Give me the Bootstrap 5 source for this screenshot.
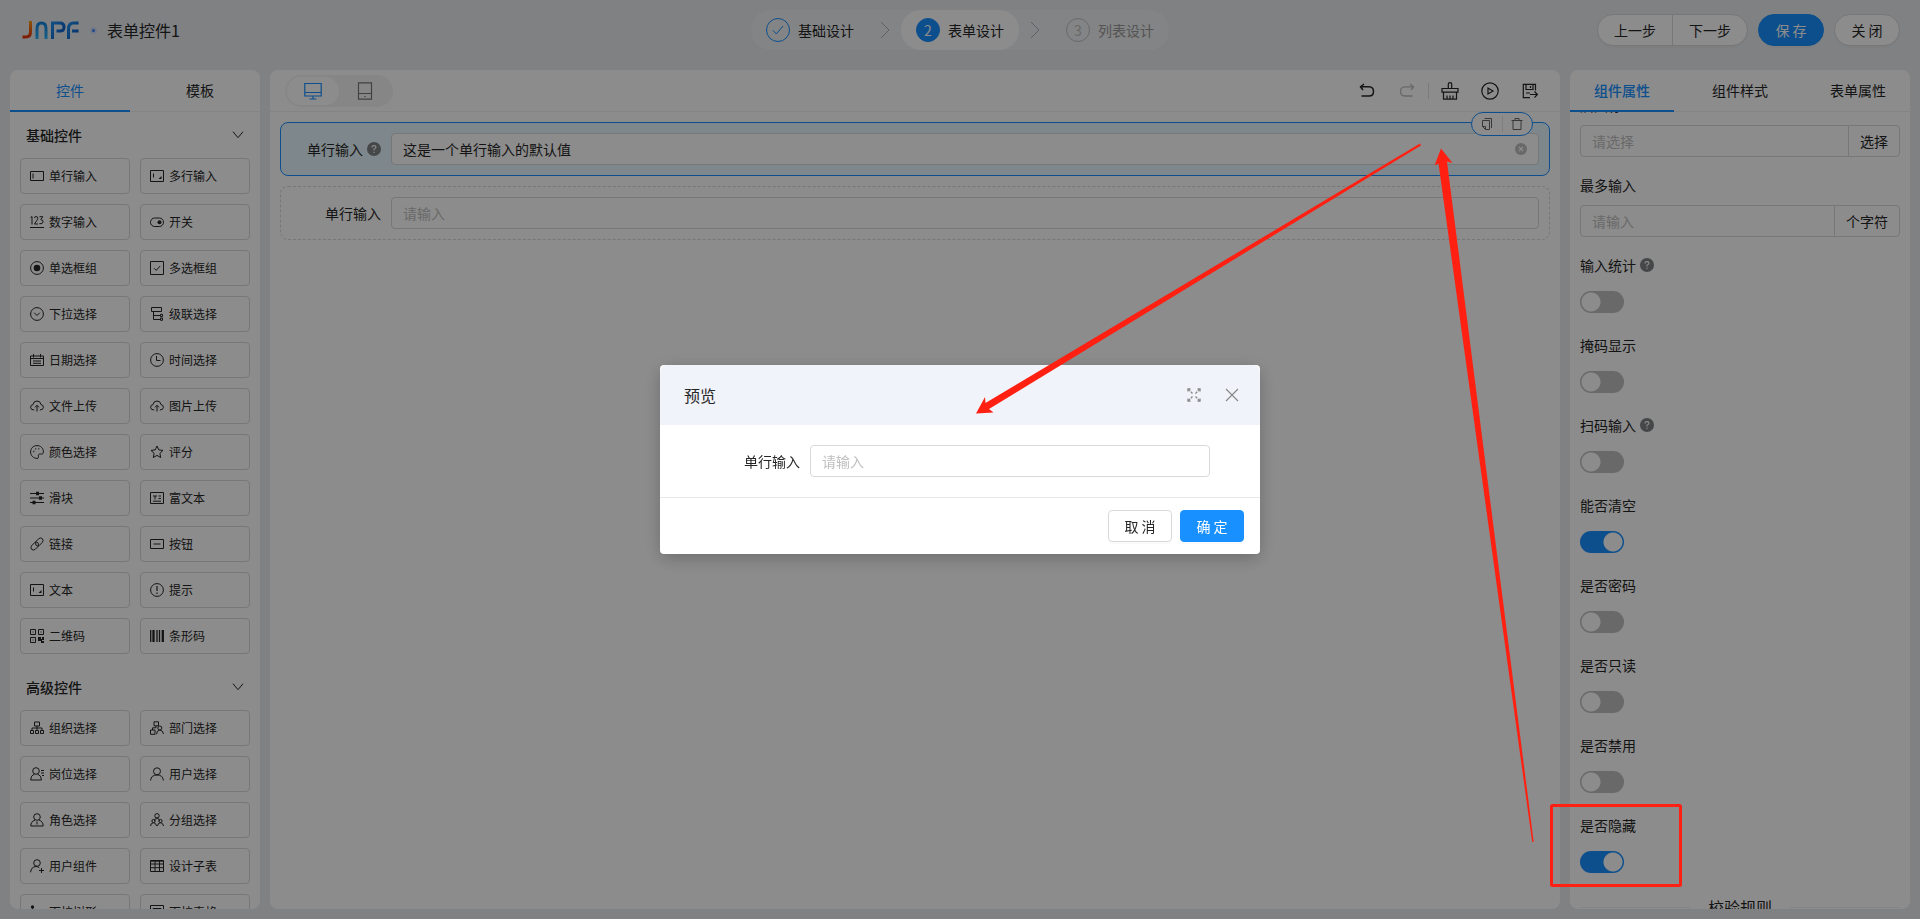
<!DOCTYPE html>
<html lang="zh-CN">
<head>
<meta charset="utf-8">
<meta name="viewport" content="width=device-width, initial-scale=1">
<title>表单设计</title>
<link href="https://cdn.jsdelivr.net/npm/bootstrap@5.3.0/dist/css/bootstrap.min.css" rel="stylesheet">
<style>
:root{--brand:#1890ff;--line:#d9d9d9;--ink:#262626;--hair:#f0f0f0}
body{font-family:"Noto Sans CJK SC",sans-serif;font-size:14px;line-height:22px;color:var(--ink);background:#e8ebef;overflow:hidden}
svg{display:block;flex:none;fill:none;stroke:currentColor}
.top-bar{display:grid;grid-template-columns:1fr auto 1fr;height:60px;padding:10px 20px 0;align-items:start}
.brand-side{height:40px;gap:10px}
.page-name{font-size:16px;line-height:24px}
.brand-dot{width:7px;height:7px;border:2px solid #d0dcf5;border-radius:50%;background:#4080ff}
.steps{height:40px;border-radius:20px;background:#eef0f3;gap:32px}
.step{height:40px;padding:0 15px;gap:8px;border-radius:20px}
.step-no{width:24px;height:24px;border:1px solid var(--brand);border-radius:50%;color:var(--brand)}
.step.now{background:#fff}
.step.now .step-no{background:var(--brand);color:#fff}
.step.later{color:#999}
.step.later .step-no{border-color:#bfbfbf;color:#bfbfbf}
.step-gap{margin:0 -21px;color:#aaadb3}
.btn{--bs-btn-font-size:14px;--bs-btn-line-height:22px;--bs-btn-padding-y:4px;--bs-btn-padding-x:15px;--bs-btn-border-radius:4px;--bs-btn-color:var(--ink);--bs-btn-border-color:var(--line);--bs-btn-bg:#fff;box-shadow:0 2px 0 rgba(0,0,0,.02);white-space:nowrap}
.btn-primary{--bs-btn-bg:var(--brand);--bs-btn-border-color:var(--brand);--bs-btn-color:#fff}
.top-bar .btn-group .btn{width:76px}
.top-bar .btn{width:66px;padding-left:0;padding-right:0}
.work{flex:1;min-height:0;gap:10px;padding:10px}
.pane{background:#fff;border-radius:8px;overflow:hidden;min-width:0}
.pane-left{width:250px}
.pane-right{width:340px}
.tab-row{height:42px;border-bottom:1px solid var(--hair);flex:none;gap:10px}
.pane-right .tab-row{gap:14px}
.tab-row button{border:0;background:none;padding:0;height:42px;color:var(--ink);border-bottom:2px solid transparent;flex:1}
.tab-row button.active{color:var(--brand);border-color:var(--brand)}
.pane-right .tab-row .active{font-weight:500}
.group-head{height:46px;padding:0 6px;font-weight:500}
.palette{padding:0 10px;flex:1;min-height:0;overflow:hidden}
.tool-grid{display:grid;grid-template-columns:1fr 1fr;gap:10px;margin-bottom:10px}
.tool{height:36px;border:1px solid var(--line);border-radius:4px;background:#fff;font-size:12px;line-height:20px;gap:5px;padding:0 9px;color:var(--ink)}
.tool-strip{height:42px;border-bottom:1px solid var(--hair);padding:0 10px 0 15px;flex:none}
.device{height:32px;padding:2px;border-radius:16px;background:#f5f5f5}
.device button{width:52px;height:28px;border:0;border-radius:14px;background:none;color:#777}
.device button.active{background:#fff;color:var(--brand)}
.strip-btn{width:40px;height:32px;border:0;background:none;padding:0;color:var(--ink)}
.strip-rule{width:1px;height:16px;background:#e0e0e0;margin:0 1px}
.form-canvas{padding:10px}
.field-row{padding:10px;border:1px dashed var(--line);border-radius:8px;margin-bottom:10px;position:relative}
.field-row.picked{border:1px solid var(--brand);background:#e6f7ff}
.field-label{width:100px;padding-right:10px;gap:4px}
.form-control{font-size:14px;line-height:22px;padding:4px 11px;height:32px;border-color:var(--line);border-radius:4px;color:var(--ink)}
.form-control::placeholder{color:#bfbfbf}
.input-group .btn,.input-group-text{font-size:14px;line-height:22px;padding:4px 11px;background:#fff;border-color:var(--line);border-radius:4px;color:var(--ink);box-shadow:none}
.clear-btn{position:absolute;right:22px;top:20px;border:0;background:none;padding:0;color:#bfbfbf}
.row-actions{position:absolute;right:16px;top:-11px;height:24px;width:62px;border:1px solid var(--brand);border-radius:12px;background:#fff;color:#666}
.row-actions button{border:0;background:none;padding:0;color:inherit;flex:1}
.row-actions i{width:1px;height:16px;background:#e8e8e8}
.props{flex:1;min-height:0;overflow:hidden;padding:0 10px}
.props-inner{margin-top:-17px}
.prop{height:80px}
.prop-label{height:20px;line-height:20px;gap:4px;margin-bottom:10px}
.switch-line{padding:6px 0 0;margin:0;min-height:0}
.form-switch .form-check-input{float:none;display:block;margin:0;width:44px;height:22px;border:0;background-color:#bfbfbf;border-radius:11px;--bs-form-switch-bg:none;background-image:radial-gradient(circle at 11px 11px,#fff 9px,transparent 10px);background-position:0 0;background-size:44px 22px}
.form-switch .form-check-input:checked{background-color:var(--brand);background-image:radial-gradient(circle at 33px 11px,#fff 9px,transparent 10px);background-position:0 0}
.rule-title{font-size:16px;line-height:24px;gap:18px}
.rule-title::before,.rule-title::after{content:"";flex:1;height:1px;background:var(--hair)}
.modal-backdrop{--bs-backdrop-opacity:.45}
.modal-dialog{max-width:600px}
.modal-content{border:0;border-radius:4px;overflow:hidden;color:var(--ink);box-shadow:0 6px 16px rgba(0,0,0,.12),0 3px 20px rgba(0,0,0,.12)}
.modal-header{height:60px;padding:0 20px 0 24px;background:#f0f3f9;border:0}
.modal-title{font-size:16px;line-height:24px;font-weight:400}
.modal-header button{border:0;background:none;padding:0;color:#888;width:16px}
.modal-header div{gap:22px}
.modal-body{padding:20px 50px}
.modal-footer{padding:12px 16px;border-top:1px solid #e8e8e8;gap:8px}
.modal-footer>*{margin:0}
.modal-footer .btn{width:64px;padding:4px 0}
.callouts{position:fixed;inset:0;width:100%;height:100%;z-index:1070;pointer-events:none;color:#ff2012}
</style>
</head>
<body class="vh-100 d-flex flex-column">
<svg width="0" height="0" class="position-absolute" aria-hidden="true">
<defs>
<symbol id="input" viewBox="0 0 14 14"><path d="M.5 2.5h13v9H.5zM3 4.5v5"/></symbol>
<symbol id="area" viewBox="0 0 14 14"><path d="M.5 1.500h13v11H.5zM3.500 4.500v4"/><path d="M11.500 7v3h-3z" fill="currentColor" stroke="none"/></symbol>
<symbol id="num" viewBox="0 0 14 14"><path d="M0 12.500h14M.5 2.500l1.500-1v8M4.500 3q0-1.500 1.700-1.500t1.600 1.800q0 1-3.300 5.700h3.500M9.500 1.700h3.300l-2 3q2.500.1 2.300 2.300-.4 2.300-3.700 1.700"/></symbol>
<symbol id="toggle" viewBox="0 0 14 14"><rect x=".5" y="3" width="13" height="8.500" rx="4.200"/><circle cx="9.500" cy="7.200" r="2" fill="currentColor" stroke="none"/></symbol>
<symbol id="radio" viewBox="0 0 14 14"><circle cx="7" cy="7" r="6.400"/><circle cx="7" cy="7" r="3.300" fill="currentColor" stroke="none"/></symbol>
<symbol id="check" viewBox="0 0 14 14"><path d="M.5.5h13v13H.5zM4 7.200l2.200 2.200L10.200 5"/></symbol>
<symbol id="drop" viewBox="0 0 14 14"><circle cx="7" cy="7" r="6.400"/><path d="M4.200 5.700 7 8.500l2.800-2.800"/></symbol>
<symbol id="cascade" viewBox="0 0 14 14"><path d="M1.500.5h10v4h-10zM3.500 4.500v8H10M3.500 8.500H10M10.500 7.300h2v2.300h-2zM10.500 11h2v2.300h-2z"/></symbol>
<symbol id="date" viewBox="0 0 14 14"><path d="M.5 3h13v9.500H.5zM3.500 1v3.500M10.500 1v3.500M.5 5.500h13M3 8h8M3 10.300h8"/></symbol>
<symbol id="time" viewBox="0 0 14 14"><circle cx="7" cy="7" r="6.400"/><path d="M6.500 3v4.500H10.500"/></symbol>
<symbol id="upload" viewBox="0 0 14 14"><path d="M4.200 11Q.6 11 .6 8.200.6 6 3 5.600 3.500 2 7 2t4 3.600q2.500.4 2.400 2.700Q13.300 11 9.800 11M7 12.500V6.500M5 8.300l2-2 2 2"/></symbol>
<symbol id="color" viewBox="0 0 14 14"><path d="M7 .6C3 .6.6 3.500.6 7S3.500 13.400 7 13.400c2 0 1.500-1.500 1.300-2.500-.2-1.200.7-2 1.900-1.900 1.400.1 3.200.3 3.200-2C13.400 3 10.500.6 7 .6z"/><path d="M3.300 6.500h1M5.200 3.900h1M8.300 3.900h1" stroke-width="1.300"/></symbol>
<symbol id="star" viewBox="0 0 14 14"><path d="m7 1 1.800 3.900 4.200.5-3.100 2.900.8 4.200L7 10.400l-3.700 2.100.8-4.200L1 5.400l4.200-.5z"/></symbol>
<symbol id="slider" viewBox="0 0 14 14"><path d="M0 2.500h14M0 7h14M0 11.500h14" stroke-width="1.200"/><path d="M6 .8h3v3.400H6zM9 5.300h3v3.400H9zM2.500 9.800h3v3.400h-3z" fill="currentColor" stroke="none"/></symbol>
<symbol id="rich" viewBox="0 0 14 14"><path d="M.5 1.500h13v11H.5zM3 5h4M5 5v3.500M8.500 5H11M8.500 7.500H11M3 10.200h8"/></symbol>
<symbol id="link" viewBox="0 0 14 14"><path d="M5.200 5.200 8.700 1.700Q10.700.1 12.400 1.700 13.900 3.500 12.300 5.400L9.300 8.400Q7.600 9.600 6.200 8.300 5 7 6 5.500M8.800 8.800 5.300 12.300Q3.300 13.900 1.600 12.300.1 10.500 1.700 8.600L4.700 5.600Q6.400 4.400 7.800 5.700 9 7 8 8.500"/></symbol>
<symbol id="button" viewBox="0 0 14 14"><path d="M.5 2.500h13v9H.5zM3.500 7h7"/></symbol>
<symbol id="tip" viewBox="0 0 14 14"><circle cx="7" cy="7" r="6.400"/><path d="M7 3v5M7 9.500V11" stroke-width="1.200"/></symbol>
<symbol id="qr" viewBox="0 0 14 14"><path d="M.5.5h5v5h-5zM8.500.5h5v5h-5zM.5 8.500h5v5h-5zM2.500 3h1M10.500 3h1M2.500 11h1"/><path d="M8 8h3v2h1V8h2v3h-2v1h2v2h-3v-2H8z" fill="currentColor" stroke="none"/></symbol>
<symbol id="bar" viewBox="0 0 14 14"><path d="M.7 1v12M7 1v12M9.500 1v12" stroke-width="1.300"/><path d="M3.500 1v12M12.800 1v12" stroke-width="2.300"/></symbol>
<symbol id="org" viewBox="0 0 14 14"><path d="M4.500 1h5v4h-5zM.5 9.500h3v3h-3zM5.500 9.500h3v3h-3zM10.500 9.500h3v3h-3zM7 5v4.500M2 9.500V7h10v2.500"/></symbol>
<symbol id="dept" viewBox="0 0 14 14"><path d="M4 .8h4.500v4H4zM.5 9h4.500v4.300H.5zM2.500 9V6.800H6V5M6.500 13.300q.2-4 3.300-4.300 3.200.3 3.700 4"/><circle cx="9.800" cy="7" r="2"/></symbol>
<symbol id="post" viewBox="0 0 14 14"><circle cx="6" cy="4" r="3.300"/><path d="M4.500 7Q.6 8.500.6 13h10.900q0-4.500-4-6M11 3.500h3M11 6h3M12 8.500h2"/></symbol>
<symbol id="user" viewBox="0 0 14 14"><circle cx="7" cy="4.300" r="3.500"/><path d="M.6 13.500Q1 8 7 8t6.400 5.500"/></symbol>
<symbol id="role" viewBox="0 0 14 14"><circle cx="7" cy="4" r="3.300"/><path d="M5 7Q.8 8.500.8 13h12.400q0-4.500-4.200-6M7 8.500v3"/></symbol>
<symbol id="team" viewBox="0 0 14 14"><circle cx="7" cy="2.800" r="2.200"/><path d="M4.500 8q0-2.500 2.500-3 2.500.5 2.500 3M.5 13q.2-3 3-3.300 2.600.3 3 3.300M7.500 13q.2-3 3-3.300 2.600.3 3 3.300"/><circle cx="3.500" cy="8" r="1.600"/><circle cx="10.500" cy="8" r="1.600"/></symbol>
<symbol id="useradd" viewBox="0 0 14 14"><circle cx="7" cy="4" r="3.300"/><path d="M.6 13.300Q1 8 6 7.500q2 0 3.300 1.200M11.500 9v5M9 11.500h5"/></symbol>
<symbol id="grid" viewBox="0 0 14 14"><path d="M.5 1.500h13v11H.5zM.5 5h13M.5 8.700h13M5 1.500v11M9.500 1.500v11M.5 2.200h13"/></symbol>
<symbol id="tree" viewBox="0 0 14 14"><path d="M2.500 2v10h8M2.500 7.500h5"/><circle cx="2.500" cy="2" r="1.700" fill="currentColor" stroke="none"/></symbol>
<symbol id="frame" viewBox="0 0 14 14"><path d="M.5.5h13v13H.5zM3 3.500h8v7H3z"/></symbol>
<symbol id="down" viewBox="0 0 12 12"><path d="m1 2.700 5 6 5-6"/></symbol>
<symbol id="next" viewBox="0 0 10 18"><path d="m1 1 8 8-8 8"/></symbol>
<symbol id="help" viewBox="0 0 14 14"><circle cx="7" cy="7" r="7" fill="#7f8286" stroke="none"/><path d="M5 5.600q0-2 2-2t2 1.700Q9 6.400 7 7.200v1.300M7 9.700v1.200" stroke="#fff" stroke-width="1.100"/></symbol>
</defs>
</svg>

<header class="top-bar">
  <div class="brand-side d-flex align-items-center">
    <svg width="60" height="18" viewBox="0 0 60 18" role="img" aria-label="JNPF" stroke-width="3">
      <defs>
        <linearGradient id="warm" x1="0" y1="0" x2="0" y2="1"><stop stop-color="#ff9a0a"/><stop offset="1" stop-color="#e8320a"/></linearGradient>
        <linearGradient id="sky" x1="0" y1="0" x2="0" y2="1"><stop stop-color="#1183e0"/><stop offset="1" stop-color="#2ab4f5"/></linearGradient>
        <linearGradient id="deep" x1="0" y1="0" x2="1" y2="1"><stop stop-color="#1e90f0"/><stop offset="1" stop-color="#0a4fc0"/></linearGradient>
      </defs>
      <path stroke="url(#warm)" d="M10.500 0v11q0 5-5 5H2.500"/>
      <path stroke="url(#sky)" d="M17 18V7.500q0-5.500 4.500-5.500t4.500 5.500V18"/>
      <path stroke="url(#deep)" d="M32.500 18V2H40q4 0 4 4t-4 4h-3.500"/>
      <path stroke="url(#deep)" d="M48.500 18V8q0-6 5-6h5M52 10h6.500"/>
    </svg>
    <span class="brand-dot"></span>
    <span class="page-name">表单控件1</span>
  </div>
  <nav class="steps d-flex align-items-center" aria-label="步骤">
    <div class="step d-flex align-items-center"><span class="step-no d-flex align-items-center justify-content-center"><svg width="12" height="12" viewBox="0 0 12 12"><path d="M1 6.300 4.300 10 11 2"/></svg></span>基础设计</div>
    <svg class="step-gap" width="10" height="18"><use href="#next"/></svg>
    <div class="step now d-flex align-items-center"><span class="step-no d-flex align-items-center justify-content-center">2</span>表单设计</div>
    <svg class="step-gap" width="10" height="18"><use href="#next"/></svg>
    <div class="step later d-flex align-items-center"><span class="step-no d-flex align-items-center justify-content-center">3</span>列表设计</div>
  </nav>
  <div class="brand-side d-flex align-items-center justify-content-end">
    <div class="btn-group" role="group"><button class="btn rounded-start-pill" type="button">上一步</button><button class="btn rounded-end-pill" type="button">下一步</button></div>
    <button class="btn btn-primary rounded-pill" type="button">保 存</button>
    <button class="btn rounded-pill" type="button">关 闭</button>
  </div>
</header>

<main class="work d-flex">
  <aside class="pane pane-left d-flex flex-column flex-shrink-0">
    <div class="tab-row d-flex"><button class="active" type="button">控件</button><button type="button">模板</button></div>
    <div class="palette" id="palette"></div>
  </aside>

  <section class="pane flex-grow-1">
    <div class="tool-strip d-flex align-items-center">
      <div class="device d-flex">
        <button class="active d-flex align-items-center justify-content-center" type="button" aria-label="桌面"><svg width="18" height="18" viewBox="0 0 18 18"><path d="M.8 1.500h16.400v12.500H.8zM1 10.500h16M9 14v3M5.500 17h7" stroke-width="1.200"/></svg></button>
        <button class="d-flex align-items-center justify-content-center" type="button" aria-label="平板"><svg width="18" height="18" viewBox="0 0 18 18"><path d="M2.500.8h13v16.400h-13zM2.500 11.500h13M8.300 14.500h1.400" stroke-width="1.200"/></svg></button>
      </div>
      <div class="d-flex align-items-center ms-auto">
        <button class="strip-btn d-flex align-items-center justify-content-center" type="button" aria-label="撤销"><svg width="16" height="16" viewBox="0 0 16 16" stroke-width="1.500"><path d="M5 1 1.500 3.800 4 7M1.500 3.800H10q4.500.2 4.500 4.700T10 13H2.500"/></svg></button>
        <button class="strip-btn d-flex align-items-center justify-content-center" type="button" aria-label="重做" disabled><svg width="16" height="16" viewBox="0 0 16 16" stroke-width="1.300" color="#bfbfbf"><path d="m11 1 3.500 2.800L12 7m2.500-3.200H6Q1.500 4 1.500 8.500T6 13h7.500"/></svg></button>
        <span class="strip-rule"></span>
        <button class="strip-btn d-flex align-items-center justify-content-center" type="button" aria-label="清空"><svg width="18" height="18" viewBox="0 0 18 18" stroke-width="1.200"><path d="M7.300 6.500V2q0-1.300 1.700-1.300T10.700 2v4.500M1 6.500h16v3.700H1zM2.500 10.200v7h13v-7M6 13.500v3.500M9 13.500v3.500M12 13.500v3.500"/></svg></button>
        <button class="strip-btn d-flex align-items-center justify-content-center" type="button" aria-label="预览"><svg width="18" height="18" viewBox="0 0 18 18" stroke-width="1.200"><circle cx="9" cy="9" r="8.200"/><path d="M7 6v6l5-3z"/></svg></button>
        <button class="strip-btn d-flex align-items-center justify-content-center" type="button" aria-label="另存"><svg width="16" height="16" viewBox="0 0 16 16" stroke-width="1.200"><path d="M13.500 7.500V1.300H1.300v13.400H8M4 1.500v5h7v-5M4 10h4M8 11.500h7M12.500 8.500l3 3-3 3M8.500 3v2"/></svg></button>
      </div>
    </div>
    <div class="form-canvas">
      <div class="field-row picked d-flex align-items-center">
        <label class="field-label d-flex align-items-center justify-content-end flex-shrink-0" for="f1">单行输入<svg width="14" height="14"><use href="#help"/></svg></label>
        <input class="form-control" id="f1" value="这是一个单行输入的默认值">
        <button class="clear-btn" type="button" aria-label="清除"><svg width="12" height="12" viewBox="0 0 12 12"><circle cx="6" cy="6" r="6" fill="currentColor" stroke="none"/><path d="m4 4 4 4M8 4 4 8" stroke="#fff" stroke-width="1.100"/></svg></button>
        <div class="row-actions d-flex align-items-center">
          <button class="d-flex justify-content-center" type="button" aria-label="复制"><svg width="12" height="12" viewBox="0 0 12 12"><path d="M1.500 2.500h7v9H4.500l-3-3zM1.500 8.500h3v3M3.500.5h7V10"/></svg></button><i></i>
          <button class="d-flex justify-content-center" type="button" aria-label="删除"><svg width="12" height="12" viewBox="0 0 12 12"><path d="M.5 2.500h11M4 2.500v-2h4v2M2 2.500v9h8v-9"/></svg></button>
        </div>
      </div>
      <div class="field-row d-flex align-items-center">
        <label class="field-label d-flex align-items-center justify-content-end flex-shrink-0" for="f2">单行输入</label>
        <input class="form-control" id="f2" placeholder="请输入">
      </div>
    </div>
  </section>

  <aside class="pane pane-right d-flex flex-column flex-shrink-0">
    <div class="tab-row d-flex"><button class="active" type="button">组件属性</button><button type="button">组件样式</button><button type="button">表单属性</button></div>
    <div class="props"><div class="props-inner">
      <div class="prop"><label class="prop-label d-flex align-items-center" for="p1">后图标</label><div class="input-group flex-nowrap"><input class="form-control" id="p1" placeholder="请选择"><button class="btn" type="button">选择</button></div></div>
      <div class="prop"><label class="prop-label d-flex align-items-center" for="p2">最多输入</label><div class="input-group flex-nowrap"><input class="form-control" id="p2" placeholder="请输入"><span class="input-group-text">个字符</span></div></div>
      <div id="switches"></div>
      <div class="rule-title d-flex align-items-center">校验规则</div>
    </div></div>
  </aside>
</main>

<div class="modal-backdrop show"></div>
<div class="modal show d-block" tabindex="-1" role="dialog" aria-labelledby="dlg">
  <div class="modal-dialog modal-dialog-centered">
    <div class="modal-content">
      <div class="modal-header">
        <h5 class="modal-title" id="dlg">预览</h5>
        <div class="d-flex">
          <button type="button" aria-label="全屏"><svg width="16" height="16" viewBox="0 0 16 16" stroke-width="1.300"><path d="m2 2 4.500 4.500M14 2 9.500 6.500M2 14l4.500-4.500M14 14 9.500 9.500" stroke-dasharray="3 1"/><path d="M2 4.500V2h2.500M11.500 2H14v2.500M2 11.500V14h2.500M14 11.500V14h-2.500"/></svg></button>
          <button type="button" aria-label="关闭"><svg width="16" height="16" viewBox="0 0 16 16" stroke-width="1.200"><path d="m2 2 12 12M14 2 2 14"/></svg></button>
        </div>
      </div>
      <div class="modal-body d-flex align-items-center">
        <label class="field-label text-end flex-shrink-0" for="m1">单行输入</label>
        <input class="form-control" id="m1" placeholder="请输入">
      </div>
      <div class="modal-footer">
        <button class="btn" type="button">取 消</button>
        <button class="btn btn-primary" type="button">确 定</button>
      </div>
    </div>
  </div>
</div>

<svg class="callouts" viewBox="0 0 1920 919" preserveAspectRatio="none" aria-hidden="true">
  <g fill="currentColor" stroke="none">
    <path d="M976 413.500 985 397l.500 6L1420 143.500l1 2L989 409l4.500 3.500z"/>
    <path d="m1441 148.500 11.500 14.500-5.500-1.500 86.700 680.500h-1.500L1438.500 163.500l-4 2z"/>
  </g>
  <rect x="1551.500" y="805.500" width="129" height="80" rx="1" stroke-width="3"/>
</svg>

<script src="https://cdn.jsdelivr.net/npm/bootstrap@5.3.0/dist/js/bootstrap.bundle.min.js"></script>
<script>
const groups = [
  ['基础控件', 'input 单行输入,area 多行输入,num 数字输入,toggle 开关,radio 单选框组,check 多选框组,drop 下拉选择,cascade 级联选择,date 日期选择,time 时间选择,upload 文件上传,upload 图片上传,color 颜色选择,star 评分,slider 滑块,rich 富文本,link 链接,button 按钮,area 文本,tip 提示,qr 二维码,bar 条形码'],
  ['高级控件', 'org 组织选择,dept 部门选择,post 岗位选择,user 用户选择,role 角色选择,team 分组选择,useradd 用户组件,grid 设计子表,tree 下拉树形,frame 下拉表格']
];
document.getElementById('palette').innerHTML = groups.map(([name, list]) =>
  `<div class="group-head d-flex align-items-center justify-content-between"><span>${name}</span><svg width="12" height="12"><use href="#down"/></svg></div><div class="tool-grid">` +
  list.split(',').map(t => { const [icon, text] = t.split(' ');
    return `<button type="button" class="tool d-flex align-items-center"><svg width="14" height="14"><use href="#${icon}"/></svg><span>${text}</span></button>`; }).join('') + '</div>').join('');
const props = [['输入统计',0,1],['掩码显示',0,0],['扫码输入',0,1],['能否清空',1,0],['是否密码',0,0],['是否只读',0,0],['是否禁用',0,0],['是否隐藏',1,0]];
document.getElementById('switches').innerHTML = props.map(([text, on, help], i) =>
  `<div class="prop"><label class="prop-label d-flex align-items-center" for="s${i}">${text}${help ? '<svg width="14" height="14"><use href="#help"/></svg>' : ''}</label><div class="form-check form-switch switch-line"><input class="form-check-input" type="checkbox" role="switch" id="s${i}" ${on ? 'checked' : ''}></div></div>`).join('');
</script>
</body>
</html>
